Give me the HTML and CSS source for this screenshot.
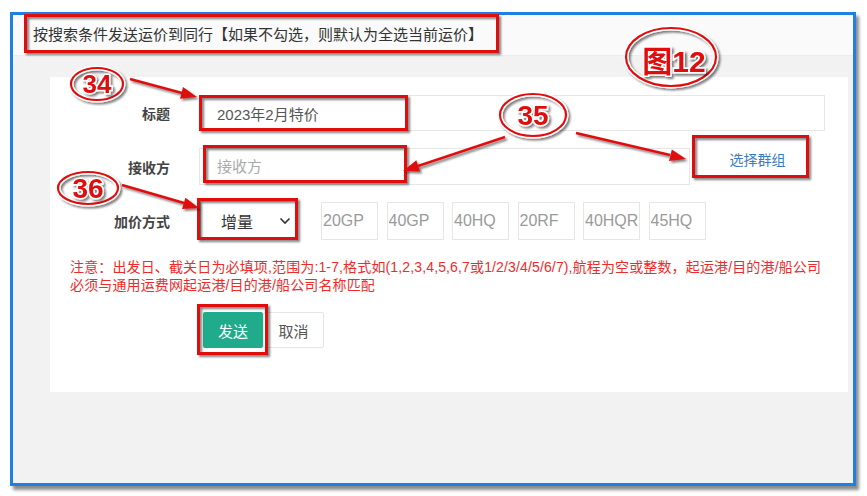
FILE: index.html
```html
<!DOCTYPE html>
<html lang="zh-CN">
<head>
  <meta charset="UTF-8">
  <meta name="viewport" content="width=device-width, initial-scale=1.0">
  <title>发送运价到同行</title>
  <link rel="stylesheet" href="styles.css">
</head>
<body>

<div class="page">
  <div class="frame">
    <div class="header">
      <span class="title">按搜索条件发送运价到同行【如果不勾选，则默认为全选当前运价】</span>
    </div>
    <div class="content">
      <form class="card">
        <div class="row row-title">
          <label class="label">标题</label>
          <input class="field" type="text" value="2023年2月特价">
        </div>
        <div class="row row-recv">
          <label class="label">接收方</label>
          <input class="field" type="text" placeholder="接收方">
          <button type="button" class="link-btn">选择群组</button>
        </div>
        <div class="row row-price">
          <label class="label">加价方式</label>
          <div class="select">
            <span>增量</span>
            <svg width="12" height="8" viewBox="0 0 12 8"><path d="M1.5 1.5 L6 6 L10.5 1.5" fill="none" stroke="#333" stroke-width="1.6"/></svg>
          </div>
          <div class="boxes">
            <input class="box" type="text" placeholder="20GP">
            <input class="box" type="text" placeholder="40GP">
            <input class="box" type="text" placeholder="40HQ">
            <input class="box" type="text" placeholder="20RF">
            <input class="box" type="text" placeholder="40HQRF">
            <input class="box" type="text" placeholder="45HQ">
          </div>
        </div>
        <p class="notice">注意：出发日、截关日为必填项,范围为:1-7,格式如(1,2,3,4,5,6,7或1/2/3/4/5/6/7),航程为空或整数，起运港/目的港/船公司<br>必须与通用运费网起运港/目的港/船公司名称匹配</p>
        <div class="actions">
          <button type="button" class="btn btn-send">发送</button>
          <button type="button" class="btn btn-cancel">取消</button>
        </div>
      </form>
    </div>
  </div>

  <!-- annotation layer drawn over the screenshot -->
  <svg class="marks" width="867" height="496" viewBox="0 0 867 496">
    <defs>
      <filter id="sh" x="-20%" y="-20%" width="140%" height="160%">
        <feDropShadow dx="2" dy="2" stdDeviation="1.2" flood-color="#000" flood-opacity="0.5"/>
      </filter>
    </defs>
    <g fill="none" stroke="#e01010" stroke-width="3" filter="url(#sh)">
      <rect x="25.5" y="15.5" width="472" height="36"/>
      <rect x="200.5" y="96.5" width="206" height="33"/>
      <rect x="204.5" y="146.5" width="201" height="35"/>
      <rect x="198.5" y="199.5" width="98" height="39"/>
      <rect x="693.5" y="136.5" width="114" height="40"/>
      <rect x="198.5" y="305.5" width="68" height="48"/>
    </g>
    <g filter="url(#sh)">
      <line x1="130" y1="79" x2="182" y2="93" stroke="#e01010" stroke-width="2.5"/>
      <polygon points="197,97 180,98.7 183,87.1" fill="#e01010"/>
      <line x1="505" y1="137" x2="418" y2="166" stroke="#e01010" stroke-width="2.5"/>
      <polygon points="403,171 416.3,160.2 420.1,171.6" fill="#e01010"/>
      <line x1="576" y1="133" x2="670" y2="155" stroke="#e01010" stroke-width="2.5"/>
      <polygon points="686,159 669,161.1 671.8,149.5" fill="#e01010"/>
      <line x1="122" y1="185" x2="184" y2="203" stroke="#e01010" stroke-width="2.5"/>
      <polygon points="199,208 182,209.1 185.4,197.7" fill="#e01010"/>
    </g>
    <g fill="none" filter="url(#sh)">
      <ellipse cx="97" cy="84" rx="26" ry="16" stroke="#fff" stroke-width="5"/>
      <ellipse cx="97" cy="84" rx="26" ry="16" stroke="#e01010" stroke-width="2.2"/>
      <ellipse cx="533" cy="115" rx="33" ry="21" stroke="#fff" stroke-width="5"/>
      <ellipse cx="533" cy="115" rx="33" ry="21" stroke="#e01010" stroke-width="2.2"/>
      <ellipse cx="88" cy="188" rx="30" ry="16" stroke="#fff" stroke-width="5"/>
      <ellipse cx="88" cy="188" rx="30" ry="16" stroke="#e01010" stroke-width="2.2"/>
      <ellipse cx="671" cy="57" rx="45" ry="29" stroke="#fff" stroke-width="5"/>
      <ellipse cx="671" cy="57" rx="45" ry="29" stroke="#e01010" stroke-width="2.2"/>
    </g>
    <g class="num" filter="url(#sh)">
      <text x="97" y="93" text-anchor="middle" font-size="26">34</text>
      <text x="533" y="125" text-anchor="middle" font-size="28">35</text>
      <text x="88" y="198" text-anchor="middle" font-size="28">36</text>
      <text x="674" y="72" text-anchor="middle" font-size="30">图12</text>
    </g>
  </svg>
</div>

</body>
</html>
```

FILE: styles.css
```css
body {
  margin: 0;
  background: #fff;
  font-family: "Liberation Sans", "Noto Sans CJK SC", sans-serif;
}

.page {
  position: relative;
  width: 867px;
  height: 496px;
  box-sizing: border-box;
  padding: 12px 0 0 10px;
  overflow: hidden;
}

.frame {
  box-sizing: border-box;
  width: 846px;
  height: 474px;
  border: 3px solid #1f7fe3;
  box-shadow: 3px 4px 3px rgba(0, 0, 0, 0.45);
  background: #f2f2f2;
  display: flex;
  flex-direction: column;
}

.header {
  box-sizing: border-box;
  height: 41px;
  padding: 0 0 4px 20px;
  background: #fafafa;
  border-bottom: 1px solid #ececec;
  display: flex;
  align-items: center;
  font-size: 15px;
  color: #333;
}

.content {
  flex: 1;
  padding: 21px 5px 0 37px;
}

.card {
  box-sizing: border-box;
  height: 315px;
  margin: 0;
  padding: 18px 23px 0 20px;
  background: #fff;
}

.row {
  display: flex;
  align-items: center;
}

.row-title {
  height: 36px;
  margin-bottom: 17px;
}

.row-recv {
  height: 37px;
  margin-bottom: 16px;
}

.row-price {
  height: 39px;
}

.label {
  width: 100px;
  margin-right: 29px;
  text-align: right;
  font-size: 14px;
  font-weight: 600;
  color: #444;
}

.field {
  flex: 1;
  box-sizing: border-box;
  height: 100%;
  padding: 0 0 0 17px;
  border: 1px solid #e6e6e6;
  font-family: inherit;
  font-size: 15px;
  color: #555;
  outline: none;
}

.field::placeholder {
  color: #aaa;
}

.link-btn {
  width: 135px;
  height: 100%;
  padding: 0 0 16px;
  border: none;
  background: #fff;
  font-family: inherit;
  font-size: 14px;
  color: #3a7cc0;
}

.select {
  box-sizing: border-box;
  width: 98px;
  height: 39px;
  margin-left: 1px;
  padding: 0 6px 0 20px;
  border: 1px solid #ddd;
  border-left-color: #7cc7b6;
  display: flex;
  align-items: center;
  justify-content: space-between;
  font-size: 16px;
  color: #333;
}

.boxes {
  display: flex;
  gap: 8.5px;
  margin-left: 23px;
}

.box {
  box-sizing: border-box;
  width: 57px;
  height: 38px;
  padding: 0 1px;
  border: 1px solid #e6e6e6;
  font-family: "Liberation Sans", sans-serif;
  font-size: 16px;
  outline: none;
}

.box::placeholder {
  color: #9a9a9a;
}

.notice {
  margin: 18px 0 0;
  font-size: 14px;
  line-height: 18px;
  letter-spacing: 0.14px;
  color: #ee2b2b;
  white-space: nowrap;
}

.actions {
  display: flex;
  margin: 18px 0 0 133px;
}

.btn {
  box-sizing: border-box;
  width: 60px;
  height: 36px;
  border-radius: 2px;
  font-family: inherit;
  font-size: 15px;
}

.btn-send {
  border: none;
  background: #20ab8b;
  color: #fff;
}

.btn-cancel {
  width: 61px;
  border: 1px solid #e6e6e6;
  background: #fff;
  color: #555;
}

.marks {
  position: absolute;
  left: 0;
  top: 0;
  pointer-events: none;
}

.num text {
  font-family: "Liberation Sans", "Noto Sans CJK SC", sans-serif;
  font-weight: bold;
  fill: #e01010;
  stroke: #fff;
  stroke-width: 3px;
  paint-order: stroke;
}
```
